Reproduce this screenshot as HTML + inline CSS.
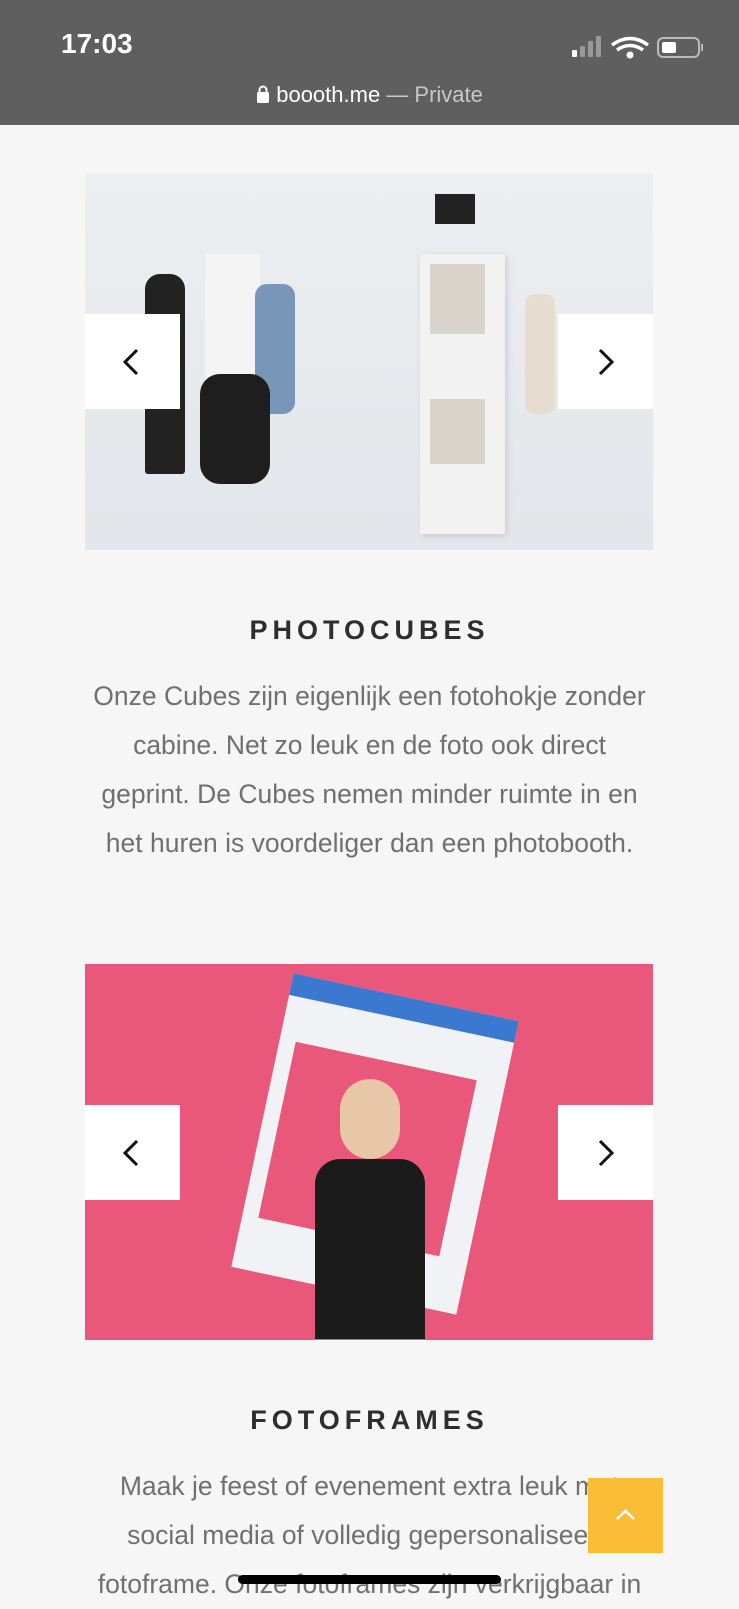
<!DOCTYPE html>
<html><head><meta charset="utf-8">
<style>
*{margin:0;padding:0;box-sizing:border-box}
body{width:739px;height:1600px;overflow:hidden;background:#f6f6f6;font-family:"Liberation Sans",sans-serif;position:relative}
.sb{position:absolute;left:0;top:0;width:739px;height:125px;background:#5f5f5f}
.time{position:absolute;left:61px;top:28px;color:#fff;font-size:28px;font-weight:bold}
.url{position:absolute;top:82px;left:0;width:739px;text-align:center;color:#fff;font-size:22px}
.url span{color:#c8c8c8}
.img{position:absolute;left:85px;width:568px;height:376px;overflow:hidden}
.nav{position:absolute;width:95px;height:95px;background:#fff}
.nav svg{position:absolute;left:35px;top:33px}
h2{position:absolute;left:0;width:739px;text-align:center;font-size:27px;letter-spacing:5px;color:#2e2e2e;font-weight:bold}
.p{position:absolute;left:0;width:739px;text-align:center;font-size:26.5px;line-height:49px;color:#707070;white-space:nowrap}
</style></head><body>
<div class="sb">
<div class="time">17:03</div>
<svg style="position:absolute;left:572px;top:36px" width="134" height="24">
<rect x="0" y="14" width="5" height="7" rx="1" fill="#fff"/>
<rect x="8" y="10" width="5" height="11" rx="1" fill="#999"/>
<rect x="16" y="5" width="5" height="16" rx="1" fill="#999"/>
<rect x="24" y="0" width="5" height="21" rx="1" fill="#999"/>
<path d="M40 9 Q58 -4 76 9" stroke="#fff" stroke-width="3.5" fill="none"/>
<path d="M45 14 Q58 5 71 14" stroke="#fff" stroke-width="3.5" fill="none"/>
<circle cx="58" cy="19" r="3.5" fill="#fff"/>
<rect x="86" y="2" width="41" height="19" rx="5" fill="none" stroke="#bbb" stroke-width="2"/>
<rect x="90" y="6" width="14" height="11" rx="2" fill="#fff"/>
<rect x="129" y="8" width="2" height="7" fill="#bbb"/>
</svg>
<div class="url"><svg width="14" height="18" style="vertical-align:-1px"><rect x="1" y="7" width="12" height="11" rx="1.5" fill="#fff"/><path d="M3.5 8V5a3.5 3.5 0 0 1 7 0v3" stroke="#fff" stroke-width="2" fill="none"/></svg> boooth.me <span>— Private</span></div>
</div>

<div class="img" style="top:174px;background:linear-gradient(#eceef1,#e3e6ea)">
<div style="position:absolute;left:120px;top:80px;width:55px;height:200px;background:#f4f4f4"></div>
<div style="position:absolute;left:335px;top:80px;width:85px;height:280px;background:#f2f2f2;box-shadow:2px 2px 6px #ccc"></div>
<div style="position:absolute;left:345px;top:90px;width:55px;height:70px;background:#d9d4cc"></div>
<div style="position:absolute;left:345px;top:225px;width:55px;height:65px;background:#d9d4cc"></div>
<div style="position:absolute;left:60px;top:100px;width:40px;height:200px;background:#222;border-radius:15px 15px 3px 3px"></div>
<div style="position:absolute;left:170px;top:110px;width:40px;height:130px;background:#7796b8;border-radius:12px"></div>
<div style="position:absolute;left:115px;top:200px;width:70px;height:110px;background:#1e1e1e;border-radius:20px"></div>
<div style="position:absolute;left:440px;top:120px;width:30px;height:120px;background:#e6dccf;border-radius:10px"></div>
<div style="position:absolute;left:350px;top:20px;width:40px;height:30px;background:#222"></div>
</div>
<div class="nav" style="left:85px;top:314px"><svg width="24" height="30"><path d="M17 3 5 15 17 27" stroke="#111" stroke-width="3" fill="none"/></svg></div>
<div class="nav" style="left:558px;top:314px"><svg width="24" height="30"><path d="M7 3 19 15 7 27" stroke="#111" stroke-width="3" fill="none"/></svg></div>

<h2 style="top:615px">PHOTOCUBES</h2>
<div class="p" style="top:672px">Onze Cubes zijn eigenlijk een fotohokje zonder<br>cabine. Net zo leuk en de foto ook direct<br>geprint. De Cubes nemen minder ruimte in en<br>het huren is voordeliger dan een photobooth.</div>

<div class="img" style="top:964px;background:#e9587b">
<div style="position:absolute;left:175px;top:30px;width:230px;height:300px;background:#f1f2f5;transform:rotate(12deg);border-top:22px solid #3b78d0"></div>
<div style="position:absolute;left:190px;top:95px;width:185px;height:180px;background:#e9587b;transform:rotate(12deg)"></div>
<div style="position:absolute;left:255px;top:115px;width:60px;height:80px;background:#e8c6a8;border-radius:30px"></div>
<div style="position:absolute;left:230px;top:195px;width:110px;height:180px;background:#1b1b1b;border-radius:25px 25px 0 0"></div>
</div>
<div class="nav" style="left:85px;top:1105px"><svg width="24" height="30"><path d="M17 3 5 15 17 27" stroke="#111" stroke-width="3" fill="none"/></svg></div>
<div class="nav" style="left:558px;top:1105px"><svg width="24" height="30"><path d="M7 3 19 15 7 27" stroke="#111" stroke-width="3" fill="none"/></svg></div>

<h2 style="top:1405px">FOTOFRAMES</h2>
<div class="p" style="top:1462px">Maak je feest of evenement extra leuk met<br>social media of volledig gepersonaliseerd<br>fotoframe. Onze fotoframes zijn verkrijgbaar in</div>

<div style="position:absolute;left:588px;top:1478px;width:75px;height:75px;background:#fbbd38">
<svg width="75" height="75"><path d="M29 41 37.5 33 46 41" stroke="#fff" stroke-width="2.5" fill="none"/></svg></div>
<div style="position:absolute;left:238px;top:1575px;width:263px;height:9px;border-radius:5px;background:#000"></div>
</body></html>
